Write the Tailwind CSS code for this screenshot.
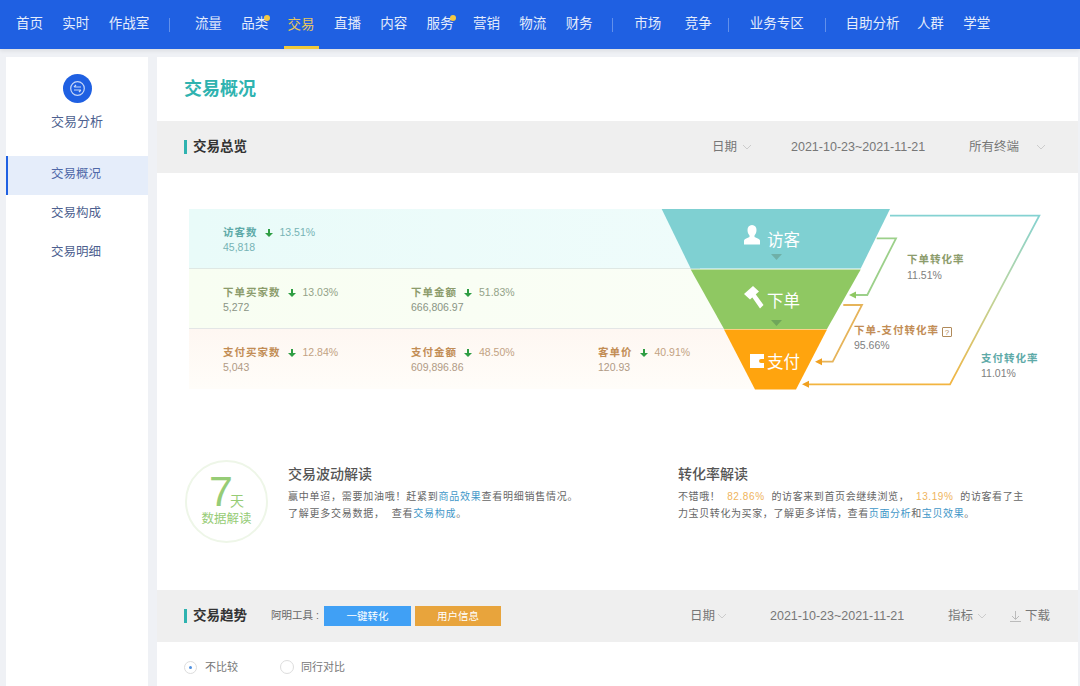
<!doctype html>
<html lang="zh">
<head>
<meta charset="UTF-8">
<title>交易概况</title>
<script src="https://cdn.jsdelivr.net/npm/@tailwindcss/browser@4"></script>
</head>
<body class="w-[1080px] h-[686px] overflow-hidden bg-[#eff1f5] [font-family:'Liberation_Sans','Noto_Sans_CJK_SC',sans-serif]">

<!-- top nav -->
<header class="h-[49px] bg-[#1f60e2] pl-[16px] flex items-center gap-[19.35px] text-[13.5px] text-[#e4ecfb] shadow-[0_2px_4px_rgba(0,0,0,0.08)]">
  <a>首页</a>
  <a>实时</a>
  <a>作战室</a>
  <span class="w-px h-[14px] bg-white/30"></span>
  <a class="ml-[6px]">流量</a>
  <a class="relative">品类<i class="absolute -right-[2px] top-[1px] w-[6px] h-[6px] rounded-full bg-[#f5c842]"></i></a>
  <a class="relative h-[49px] leading-[49px] text-[#e6c65c] -mx-[4px] px-[4px] border-b-[3px] border-[#f0c93a]">交易</a>
  <a>直播</a>
  <a>内容</a>
  <a class="relative">服务<i class="absolute -right-[2px] top-[1px] w-[6px] h-[6px] rounded-full bg-[#f5c842]"></i></a>
  <a>营销</a>
  <a>物流</a>
  <a>财务</a>
  <span class="w-px h-[14px] bg-white/30"></span>
  <a class="ml-[2px]">市场</a>
  <a class="ml-[4px]">竞争</a>
  <span class="w-px h-[14px] bg-white/30 -ml-[3px]"></span>
  <a class="ml-[1.5px]">业务专区</a>
  <span class="w-px h-[14px] bg-white/30 ml-[2px]"></span>
  <a>自助分析</a>
  <a class="-ml-[2px]">人群</a>
  <a>学堂</a>
</header>

<div class="flex pt-[8px] pl-[6px]">
  <!-- side menu -->
  <aside class="w-[142px] h-[629px] bg-white text-[12.5px] text-[#4d5f8f]">
    <div class="h-[99px] flex flex-col items-center pt-[17px]">
      <span class="w-[29px] h-[29px] rounded-full bg-[#1f60e2] flex items-center justify-center">
        <svg width="17" height="17" viewBox="0 0 17 17" fill="none" stroke="#c8d8f8" stroke-width="1.2">
          <circle cx="8.5" cy="8.5" r="6.8"/>
          <path d="M5 7h7M5 7l2-2M12 10H5M12 10l-2 2"/>
        </svg>
      </span>
      <span class="mt-[9px] text-[13px] leading-[20px]">交易分析</span>
    </div>
    <div class="h-[39px] leading-[37px] text-center bg-[#e5edfa] border-l-2 border-[#1f60e2] text-[#5068a8] pr-[4px]">交易概况</div>
    <div class="h-[39px] leading-[37px] text-center pr-[2px]">交易构成</div>
    <div class="h-[39px] leading-[37px] text-center pr-[2px]">交易明细</div>
  </aside>

  <main class="ml-[9px] w-[921px] h-[629px] bg-white">
    <div class="h-[64px] pl-[27px] flex items-center text-[18px] font-bold text-[#2fb3b0]">交易概况</div>

    <!-- overview bar -->
    <div class="h-[52px] bg-[#efefef] pl-[27px] flex items-center text-[12.5px] text-[#777]">
      <span class="w-[3px] h-[14px] bg-[#2fb3b0]"></span>
      <b class="ml-[6px] text-[13.5px] font-bold text-[#333]">交易总览</b>
      <span class="ml-[465px]">日期</span>
      <svg class="ml-[5px]" width="10" height="6" fill="none" stroke="#ccc"><path d="M1 1l4 4 4-4"/></svg>
      <span class="ml-[39px] w-[135px]">2021-10-23~2021-11-21</span>
      <span class="ml-[43px]">所有终端</span>
      <svg class="ml-[17px]" width="10" height="6" fill="none" stroke="#ccc"><path d="M1 1l4 4 4-4"/></svg>
    </div>

    <!-- funnel -->
    <section class="relative h-[256px] pt-[36px] pl-[32px] text-[10.5px]">
      <div class="w-[511px] h-[60px] pt-[15px] pl-[34px] bg-linear-to-r from-[#e9fbf9] to-[#effcfb] border-b border-[#dfe8e4]">
        <div class="grid grid-cols-[188px_187px_auto] text-[#76b3b5]">
          <div>
            <p class="leading-[16px]"><b class="font-bold text-[#5eaaa8] tracking-[1px]">访客数</b><svg class="inline mx-[7px]" width="8" height="8" viewBox="0 0 8 8" fill="#2f9e44"><path d="M3 0h2v4h3L4 8 0 4h3z"/></svg>13.51%</p>
            <p class="leading-[15px]">45,818</p>
          </div>
        </div>
      </div>
      <div class="w-[541px] h-[60px] pt-[15px] pl-[34px] bg-linear-to-r from-[#f8fef2] to-[#fafef6] border-b border-[#e3e6e6]">
        <div class="grid grid-cols-[188px_187px_auto] text-[#93a288]">
          <div>
            <p class="leading-[16px]"><b class="font-bold text-[#8c9c6c] tracking-[1px]">下单买家数</b><svg class="inline mx-[7px]" width="8" height="8" viewBox="0 0 8 8" fill="#2f9e44"><path d="M3 0h2v4h3L4 8 0 4h3z"/></svg>13.03%</p>
            <p class="leading-[15px] text-[#8a9484]">5,272</p>
          </div>
          <div>
            <p class="leading-[16px]"><b class="font-bold text-[#8c9c6c] tracking-[1px]">下单金额</b><svg class="inline mx-[7px]" width="8" height="8" viewBox="0 0 8 8" fill="#2f9e44"><path d="M3 0h2v4h3L4 8 0 4h3z"/></svg>51.83%</p>
            <p class="leading-[15px] text-[#8a9484]">666,806.97</p>
          </div>
        </div>
      </div>
      <div class="w-[571px] h-[60px] pt-[15px] pl-[34px] bg-linear-to-b from-[#fef7f2] to-[#fffdf9]">
        <div class="grid grid-cols-[188px_187px_auto] text-[#c2a283]">
          <div>
            <p class="leading-[16px]"><b class="font-bold text-[#c28d55] tracking-[1px]">支付买家数</b><svg class="inline mx-[7px]" width="8" height="8" viewBox="0 0 8 8" fill="#2f9e44"><path d="M3 0h2v4h3L4 8 0 4h3z"/></svg>12.84%</p>
            <p class="leading-[15px] text-[#b09a85]">5,043</p>
          </div>
          <div>
            <p class="leading-[16px]"><b class="font-bold text-[#c28d55] tracking-[1px]">支付金额</b><svg class="inline mx-[7px]" width="8" height="8" viewBox="0 0 8 8" fill="#2f9e44"><path d="M3 0h2v4h3L4 8 0 4h3z"/></svg>48.50%</p>
            <p class="leading-[15px] text-[#b09a85]">609,896.86</p>
          </div>
          <div>
            <p class="leading-[16px]"><b class="font-bold text-[#c28d55] tracking-[1px]">客单价</b><svg class="inline mx-[7px]" width="8" height="8" viewBox="0 0 8 8" fill="#2f9e44"><path d="M3 0h2v4h3L4 8 0 4h3z"/></svg>40.91%</p>
            <p class="leading-[15px] text-[#b09a85]">120.93</p>
          </div>
        </div>
      </div>

      <!-- funnel drawing, coordinates are page px minus section origin (157,173) -->
      <svg class="absolute left-0 top-0" width="921" height="256" viewBox="157 173 921 256" fill="none">
        <defs>
          <linearGradient id="conv" x1="0" y1="215" x2="0" y2="385" gradientUnits="userSpaceOnUse">
            <stop offset="0" stop-color="#84d2d2"/>
            <stop offset="0.45" stop-color="#bcd6a0"/>
            <stop offset="1" stop-color="#f3b440"/>
          </linearGradient>
        </defs>
        <path d="M661.7 209H890L860.7 268.5H690.7z" fill="#7fd0d2"/>
        <path d="M690.7 269.5H860.7L827 329H724z" fill="#8fc862"/>
        <path d="M724 329.5H827L796 389.5H755z" fill="#ffa40e"/>
        <path d="M771 254h11l-5.500 6z" fill="#6fb0a8"/>
        <path d="M771 320h11l-5.500 6z" fill="#6fa65a"/>
        <!-- user -->
        <path d="M752 225c3 0 4.500 2.200 4.500 5s-1.200 4.500-2 5.500v1.500c2 1 5 1.500 5.500 3.500v4h-16v-4c.5-2 3.500-2.500 5.500-3.500v-1.500c-.8-1-2-2.700-2-5.500s1.500-5 4.500-5z" fill="#fff"/>
        <!-- hammer -->
        <path d="M744 294l9-8 6 5.500-9 8zM752 297l3.500-3 8 11-3.500 3.500z" fill="#fff"/>
        <!-- wallet -->
        <path d="M750 354h14v5h-3a2 2 0 0 0 0 4h3v5h-14z" fill="#fff"/>
        <!-- connectors -->
        <path d="M876.700 238.300H896L867.300 295H853" stroke="#9cd08a" stroke-width="1.800"/>
        <path d="M856 291.500v7l-7-3.500z" fill="#8fc862"/>
        <path d="M843.300 305H862L832.700 361.700H820" stroke="#e6b45a" stroke-width="1.800"/>
        <path d="M822 358.200v7l-7-3.500z" fill="#f0a020"/>
        <path d="M890 215.700H1039.300L950 384.300H807" stroke="url(#conv)" stroke-width="1.800"/>
        <path d="M809 380.800v7l-7-3.500z" fill="#f0a020"/>
      </svg>

      <span class="absolute left-[610px] top-[56px] text-[16.5px] leading-[22px] text-white">访客</span>
      <span class="absolute left-[610px] top-[117px] text-[16.5px] leading-[22px] text-white">下单</span>
      <span class="absolute left-[610px] top-[178px] text-[16.5px] leading-[22px] text-white">支付</span>

      <div class="absolute left-[750px] top-[78px] leading-[16px] text-[#808080]">
        <b class="block font-bold text-[#8c9c6c] tracking-[1px]">下单转化率</b>11.51%
      </div>
      <div class="absolute left-[697px] top-[150px] leading-[15px] text-[#808080]">
        <b class="font-bold text-[#c28d55] tracking-[1px]">下单-支付转化率</b>
        <span class="inline-block w-[10px] h-[10px] rounded-[1px] border border-[#b08a5a] text-[8px] leading-[9px] text-center text-[#b08a5a] align-[-1px]">?</span>
        <br>95.66%
      </div>
      <div class="absolute left-[824px] top-[178px] leading-[15px] text-[#808080]">
        <b class="block font-bold text-[#5eaaa8] tracking-[1px]">支付转化率</b>11.01%
      </div>
    </section>

    <!-- interpretation -->
    <section class="h-[161px] flex pt-[31px] pl-[28px]">
      <div class="w-[83px] h-[83px] rounded-full border-2 border-[#eef6e8] text-[#96cc76] flex flex-col items-center pt-[11px]">
        <div class="flex items-end h-[36px]">
          <span class="text-[43px] leading-[36px] font-light tracking-[-3px]">7</span>
          <span class="text-[14px] leading-[16px]">天</span>
        </div>
        <span class="text-[12.5px] leading-[18px] mt-[1px]">数据解读</span>
      </div>
      <div class="ml-[20px] w-[390px] pt-[4px] text-[10px] leading-[17px] tracking-[0.75px] text-[#666] whitespace-nowrap">
        <h3 class="text-[14px] leading-[20px] tracking-normal font-medium text-[#555] mb-[4px]">交易波动解读</h3>
        <p>赢中单迢，需要加油哦！赶紧到<a class="text-[#3f97c8]">商品效果</a>查看明细销售情况。</p>
        <p>了解更多交易数据， &nbsp;查看<a class="text-[#3f97c8]">交易构成</a>。</p>
      </div>
      <div class="w-[350px] pt-[4px] text-[10px] leading-[17px] tracking-[0.6px] text-[#666] whitespace-nowrap">
        <h3 class="text-[14px] leading-[20px] tracking-normal font-medium text-[#555] mb-[4px]">转化率解读</h3>
        <p>不错哦！ <span class="text-[#efb45c]">&nbsp;82.86%&nbsp;</span> 的访客来到首页会继续浏览， <span class="text-[#efb45c]">&nbsp;13.19%&nbsp;</span> 的访客看了主</p>
        <p>力宝贝转化为买家，了解更多详情，查看<a class="text-[#3f97c8]">页面分析</a>和<a class="text-[#3f97c8]">宝贝效果</a>。</p>
      </div>
    </section>

    <!-- trend bar -->
    <div class="h-[52px] bg-[#efefef] pl-[27px] flex items-center text-[12.5px] text-[#777]">
      <span class="w-[3px] h-[14px] bg-[#2fb3b0]"></span>
      <b class="ml-[6px] text-[13.5px] font-bold text-[#333]">交易趋势</b>
      <span class="ml-[24px] w-[50px] whitespace-nowrap text-[10.5px] text-[#666]">阿明工具 :</span>
      <span class="ml-[3px] w-[87px] h-[20px] bg-[#40a0f5] text-white text-[10.5px] leading-[20px] text-center">一键转化</span>
      <span class="ml-[4px] w-[86px] h-[20px] bg-[#e8a43c] text-white text-[10.5px] leading-[20px] text-center">用户信息</span>
      <span class="ml-[189px]">日期</span>
      <svg class="ml-[2px]" width="10" height="6" fill="none" stroke="#ccc"><path d="M1 1l4 4 4-4"/></svg>
      <span class="ml-[43px] w-[135px]">2021-10-23~2021-11-21</span>
      <span class="ml-[43px]">指标</span>
      <svg class="ml-[4px]" width="10" height="6" fill="none" stroke="#ccc"><path d="M1 1l4 4 4-4"/></svg>
      <svg class="ml-[23px]" width="11" height="11" fill="none" stroke="#bbb"><path d="M5.500 0v8M2 5l3.500 3.500L9 5M0 10.500h11"/></svg>
      <span class="ml-[4px]">下载</span>
    </div>

    <div class="flex items-center pl-[27px] h-[50px] text-[11px] text-[#777]">
      <span class="w-[13px] h-[13px] rounded-full border border-[#ddd] flex items-center justify-center"><i class="w-[3px] h-[3px] rounded-full bg-[#4f90e0]"></i></span>
      <span class="ml-[8px] w-[33px]">不比较</span>
      <span class="ml-[42px] w-[14px] h-[14px] rounded-full border border-[#ddd]"></span>
      <span class="ml-[7px]">同行对比</span>
    </div>
  </main>
</div>
</body>
</html>
